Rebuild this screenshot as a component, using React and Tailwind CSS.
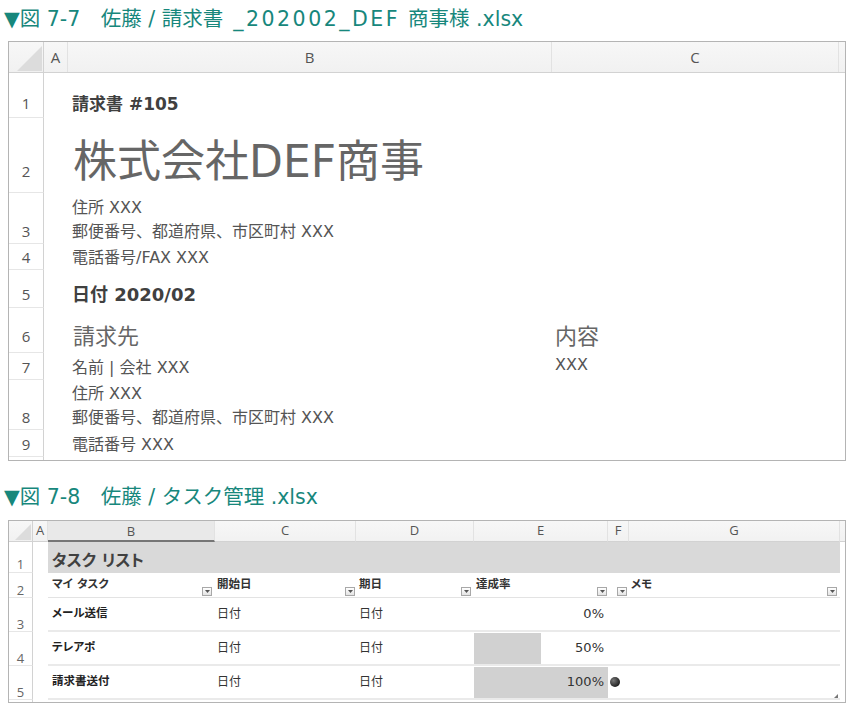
import React from "react";

function CornerTri({ size }) {
  return (
    <svg width={size} height={size} viewBox="0 0 10 10" className="absolute bottom-[1px] right-[1px]">
      <path d="M10 0V10H0Z" fill="#dcdcdc" />
    </svg>
  );
}

function FilterBtn() {
  return (
    <span className="inline-flex h-[9px] w-[10px] shrink-0 items-center justify-center border border-[#a8a8a8] bg-gradient-to-b from-white to-[#e4e4e4]">
      <svg width="5" height="3" viewBox="0 0 5 3">
        <path d="M0 0H5L2.5 3Z" fill="#555" />
      </svg>
    </span>
  );
}

const s1rows = [
  {
    n: "1",
    h: "h-[45px]",
    pb: "pb-[2px]",
    b: <div className="text-[17px] font-bold leading-[24px] text-[#404040]">請求書 #105</div>,
  },
  {
    n: "2",
    h: "h-[75px]",
    pb: "pb-[9px]",
    b: <div className="pb-[1px] pl-[1px] text-[44px] leading-[42px] text-[#666]">株式会社DEF商事</div>,
  },
  {
    n: "3",
    h: "h-[51px]",
    pb: "pb-0",
    b: (
      <>
        <div>住所 XXX</div>
        <div>郵便番号、都道府県、市区町村 XXX</div>
      </>
    ),
  },
  { n: "4", h: "h-[26px]", pb: "pb-0", b: <div>電話番号/FAX XXX</div> },
  {
    n: "5",
    h: "h-[38px]",
    pb: "pb-[1px]",
    b: <div className="text-[18px] font-bold text-[#404040]">日付 2020/02</div>,
  },
  {
    n: "6",
    h: "h-[45px]",
    pb: "pb-[4px]",
    b: <div className="pl-[1px] text-[22px] leading-[24px] text-[#666]">請求先</div>,
    c: <div className="text-[22px] leading-[24px] text-[#666]">内容</div>,
  },
  {
    n: "7",
    h: "h-[27px]",
    pb: "pb-0",
    b: <div>名前 | 会社 XXX</div>,
    c: <div className="pb-[3px]">XXX</div>,
  },
  {
    n: "8",
    h: "h-[50px]",
    pb: "pb-0",
    b: (
      <>
        <div>住所 XXX</div>
        <div>郵便番号、都道府県、市区町村 XXX</div>
      </>
    ),
  },
  { n: "9", h: "h-[27px]", pb: "pb-0", b: <div>電話番号 XXX</div> },
];

function Sheet1() {
  return (
    <div className="ml-[8px] w-[838px] border border-[#b4b4b4] bg-white">
      <div className="flex h-[31px] border-b border-[#d2d2d2] bg-gradient-to-b from-[#f7f7f7] to-[#f1f1f1] font-['Open_Sans',sans-serif] text-[15px] text-[#555]">
        <div className="relative w-[35px] shrink-0 border-r border-[#d2d2d2]">
          <CornerTri size={25} />
        </div>
        <div className="flex w-[24px] shrink-0 items-center justify-center border-r border-[#e2e2e2]">A</div>
        <div className="flex w-[484px] shrink-0 items-center justify-center border-r border-[#e2e2e2]">B</div>
        <div className="flex w-[287px] shrink-0 items-center justify-center border-r border-[#e2e2e2]">C</div>
        <div className="flex-1" />
      </div>
      {s1rows.map((r) => (
        <div key={r.n} className={`flex ${r.h}`}>
          <div
            className={`flex w-[35px] shrink-0 items-end justify-center border-r border-b border-r-[#d2d2d2] border-b-[#e6e6e6] ${r.pb} font-['Open_Sans',sans-serif] text-[15px] leading-[24px] text-[#555]`}
          >
            {r.n}
          </div>
          <div className="w-[24px] shrink-0" />
          <div className={`flex w-[484px] shrink-0 flex-col justify-end ${r.pb} pl-[4px] text-[16px] leading-[24px] text-[#555] whitespace-nowrap`}>
            {r.b}
          </div>
          <div className={`flex flex-1 flex-col justify-end ${r.pb} pl-[3px] text-[16px] leading-[24px] text-[#555] whitespace-nowrap`}>
            {r.c}
          </div>
        </div>
      ))}
      <div className="flex h-[3px]">
        <div className="w-[35px] shrink-0 border-r border-[#d2d2d2]" />
      </div>
    </div>
  );
}

const tasks = [
  { n: "3", name: "メール送信", pct: 0 },
  { n: "4", name: "テレアポ", pct: 50 },
  { n: "5", name: "請求書送付", pct: 100 },
];

function Sheet2() {
  const hdr = "flex items-center justify-center border-r border-[#e2e2e2]";
  const rn = "flex w-[24px] shrink-0 items-end justify-center border-r border-b border-r-[#d2d2d2] border-b-[#e6e6e6] font-['Open_Sans',sans-serif] text-[13px] font-normal leading-[14px] text-[#666]";
  return (
    <div className="relative ml-[8px] w-[838px] border border-[#b4b4b4] bg-white [font-feature-settings:'palt']">
      <div className="flex h-[21px] bg-gradient-to-b from-[#f7f7f7] to-[#f1f1f1] font-['Open_Sans',sans-serif] text-[13px] text-[#555]">
        <div className="relative w-[24px] shrink-0 border-r border-b border-[#d2d2d2]">
          <CornerTri size={16} />
        </div>
        <div className={`w-[15px] shrink-0 border-b border-b-[#d2d2d2] ${hdr}`}>A</div>
        <div className="flex w-[167px] shrink-0 items-center justify-center border-r border-b-2 border-r-[#e2e2e2] border-b-[#767676] bg-[#e9e9e9] pt-[2px]">B</div>
        <div className={`w-[141px] shrink-0 border-b border-b-[#d2d2d2] ${hdr}`}>C</div>
        <div className={`w-[118px] shrink-0 border-b border-b-[#d2d2d2] ${hdr}`}>D</div>
        <div className={`w-[134px] shrink-0 border-b border-b-[#d2d2d2] ${hdr}`}>E</div>
        <div className={`w-[21px] shrink-0 border-b border-b-[#d2d2d2] ${hdr}`}>F</div>
        <div className={`w-[211px] shrink-0 border-b border-b-[#d2d2d2] ${hdr}`}>G</div>
        <div className="flex-1 border-b border-[#d2d2d2]" />
      </div>
      {/* row 1 */}
      <div className="flex h-[31px]">
        <div className={`${rn} pb-[1px]`}>1</div>
        <div className="w-[15px] shrink-0" />
        <div className="flex w-[792px] shrink-0 items-center bg-[#d9d9d9] pl-[4px] pt-[7px] text-[16px] font-bold text-[#404040]">
          タスク リスト
        </div>
      </div>
      {/* row 2 */}
      <div className="flex h-[25px] text-[11.5px] font-bold text-[#333]">
        <div className={rn}>2</div>
        <div className="w-[15px] shrink-0" />
        <div className="flex w-[167px] shrink-0 items-end justify-between border-b border-[#e3e3e3] pb-[1px] pl-[4px] pr-[3px]">
          <span className="pb-[3px]">マイ タスク</span>
          <FilterBtn />
        </div>
        <div className="flex w-[141px] shrink-0 items-end justify-between border-b border-[#e3e3e3] pb-[1px] pl-[2px] pr-[1px]">
          <span className="pb-[3px]">開始日</span>
          <FilterBtn />
        </div>
        <div className="flex w-[118px] shrink-0 items-end justify-between border-b border-[#e3e3e3] pb-[1px] pl-[3px] pr-[3px]">
          <span className="pb-[3px]">期日</span>
          <FilterBtn />
        </div>
        <div className="flex w-[134px] shrink-0 items-end justify-between border-b border-[#e3e3e3] pb-[1px] pl-[2px] pr-[1px]">
          <span className="pb-[3px]">達成率</span>
          <FilterBtn />
        </div>
        <div className="flex w-[21px] shrink-0 items-end justify-end border-b border-[#e3e3e3] pb-[1px] pr-[2px]">
          <FilterBtn />
        </div>
        <div className="flex w-[211px] shrink-0 items-end justify-between border-b border-[#e3e3e3] pb-[1px] pl-[2px] pr-[3px]">
          <span className="pb-[3px]">メモ</span>
          <FilterBtn />
        </div>
      </div>
      {/* data rows */}
      {tasks.map((t) => (
        <div key={t.n} className="flex h-[34px] text-[11.5px] text-[#333]">
          <div className={rn}>{t.n}</div>
          <div className="w-[15px] shrink-0" />
          <div className="flex w-[167px] shrink-0 items-center border-b-2 border-[#eaeaea] pl-[4px] font-bold text-[#222]">
            {t.name}
          </div>
          <div className="flex w-[141px] shrink-0 items-center border-b-2 border-[#eaeaea] pl-[2px] text-[12px]">日付</div>
          <div className="flex w-[118px] shrink-0 items-center border-b-2 border-[#eaeaea] pl-[3px] text-[12px]">日付</div>
          <div className="relative flex w-[134px] shrink-0 items-center justify-end border-b-2 border-[#eaeaea] pr-[4px] text-[13px]">
            {t.pct > 0 && (
              <div className="absolute left-0 top-[1px] bottom-0 bg-[#d1d1d1]" style={{ width: `${t.pct}%` }} />
            )}
            <span className="relative">{t.pct}%</span>
          </div>
          <div className="flex w-[21px] shrink-0 items-center border-b-2 border-[#eaeaea] pl-[2px]">
            {t.pct === 100 && (
              <span className="h-[10px] w-[10px] rounded-full bg-[radial-gradient(circle_at_35%_35%,#777,#222_70%)]" />
            )}
          </div>
          <div className="w-[211px] shrink-0 border-b-2 border-[#eaeaea]" />
        </div>
      ))}
      <div className="flex h-[2px]">
        <div className="w-[24px] shrink-0 border-r border-[#d2d2d2]" />
      </div>
      <svg width="4" height="4" viewBox="0 0 4 4" className="absolute bottom-[4px] right-[7px]">
        <path d="M4 0V4H0Z" fill="#777" />
      </svg>
    </div>
  );
}

export default function App() {
  return (
    <div className="h-[713px] w-[856px] bg-white font-['DejaVu_Sans','Noto_Sans_CJK_JP',sans-serif]">
      <div className="flex h-[41px] items-center pb-[3px] pl-[4px] text-[20.5px] text-[#17877c] whitespace-pre">
        {"▼図 7-7　佐藤 / 請求書"}
        <span className="ml-[10px] tracking-[2.5px]">_202002_DEF</span>
        <span className="ml-[8px]">{"商事様 .xlsx"}</span>
      </div>
      <Sheet1 />
      <div className="flex h-[59px] items-center pt-[13px] pl-[4px] text-[20.5px] text-[#17877c] whitespace-pre">
        {"▼図 7-8　佐藤 / タスク管理 .xlsx"}
      </div>
      <Sheet2 />
    </div>
  );
}
